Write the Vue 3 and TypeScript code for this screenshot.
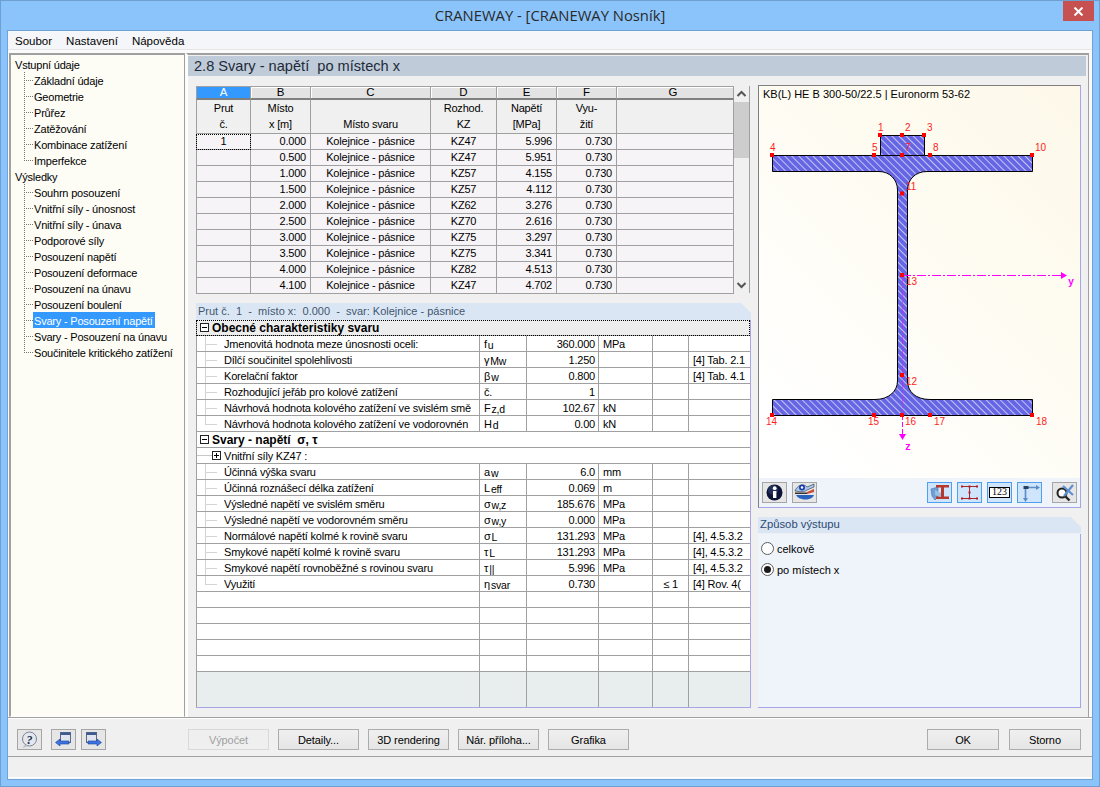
<script setup lang="ts">
interface TreeItem { label: string; last?: boolean; selected?: boolean }
interface Row {
  kind: 'group' | 'sub' | 'item' | 'empty'
  label?: string
  sym?: string
  sub?: string
  val?: string
  unit?: string
  lim?: string
  ref?: string
  focus?: boolean
  last?: boolean
}

const heading = '2.8 Svary - napětí  po místech x'
const infoText = 'Prut č.  1  -  místo x:  0.000  -  svar: Kolejnice - pásnice'

const inputs: TreeItem[] = [
  { label: 'Základní údaje' }, { label: 'Geometrie' }, { label: 'Průřez' }, { label: 'Zatěžování' },
  { label: 'Kombinace zatížení' }, { label: 'Imperfekce', last: true },
]
const results: TreeItem[] = [
  { label: 'Souhrn posouzení' }, { label: 'Vnitřní síly - únosnost' }, { label: 'Vnitřní síly - únava' },
  { label: 'Podporové síly' }, { label: 'Posouzení napětí' }, { label: 'Posouzení deformace' },
  { label: 'Posouzení na únavu' }, { label: 'Posouzení boulení' },
  { label: 'Svary - Posouzení napětí', selected: true }, { label: 'Svary - Posouzení na únavu' },
  { label: 'Součinitele kritického zatížení', last: true },
]

const letters = ['A', 'B', 'C', 'D', 'E', 'F', 'G']
const stations = [
  ['1', '0.000', 'KZ47', '5.996'], ['', '0.500', 'KZ47', '5.951'], ['', '1.000', 'KZ57', '4.155'],
  ['', '1.500', 'KZ57', '4.112'], ['', '2.000', 'KZ62', '3.276'], ['', '2.500', 'KZ70', '2.616'],
  ['', '3.000', 'KZ75', '3.297'], ['', '3.500', 'KZ75', '3.341'], ['', '4.000', 'KZ82', '4.513'],
  ['', '4.100', 'KZ47', '4.702'],
]

const rows: Row[] = [
  { kind: 'group', label: 'Obecné charakteristiky svaru', focus: true },
  { kind: 'item', label: 'Jmenovitá hodnota meze únosnosti oceli:', sym: 'f', sub: 'u', val: '360.000', unit: 'MPa' },
  { kind: 'item', label: 'Dílčí součinitel spolehlivosti', sym: 'γ', sub: 'Mw', val: '1.250', ref: '[4] Tab. 2.1' },
  { kind: 'item', label: 'Korelační faktor', sym: 'β', sub: 'w', val: '0.800', ref: '[4] Tab. 4.1' },
  { kind: 'item', label: 'Rozhodující jeřáb pro kolové zatížení', sym: 'č.', val: '1' },
  { kind: 'item', label: 'Návrhová hodnota kolového zatížení ve svislém smě', sym: 'F', sub: 'z,d', val: '102.67', unit: 'kN' },
  { kind: 'item', label: 'Návrhová hodnota kolového zatížení ve vodorovnén', sym: 'H', sub: 'd', val: '0.00', unit: 'kN', last: true },
  { kind: 'group', label: 'Svary - napětí  σ, τ' },
  { kind: 'sub', label: 'Vnitřní síly KZ47 :' },
  { kind: 'item', label: 'Účinná výška svaru', sym: 'a', sub: 'w', val: '6.0', unit: 'mm' },
  { kind: 'item', label: 'Účinná roznášecí délka zatížení', sym: 'L', sub: 'eff', val: '0.069', unit: 'm' },
  { kind: 'item', label: 'Výsledné napětí ve svislém směru', sym: 'σ', sub: 'w,z', val: '185.676', unit: 'MPa' },
  { kind: 'item', label: 'Výsledné napětí ve vodorovném směru', sym: 'σ', sub: 'w,y', val: '0.000', unit: 'MPa' },
  { kind: 'item', label: 'Normálové napětí kolmé k rovině svaru', sym: 'σ', sub: 'L', val: '131.293', unit: 'MPa', ref: '[4], 4.5.3.2' },
  { kind: 'item', label: 'Smykové napětí kolmé k rovině svaru', sym: 'τ', sub: 'L', val: '131.293', unit: 'MPa', ref: '[4], 4.5.3.2' },
  { kind: 'item', label: 'Smykové napětí rovnoběžné s rovinou svaru', sym: 'τ', sub: '||', val: '5.996', unit: 'MPa', ref: '[4], 4.5.3.2' },
  { kind: 'item', label: 'Využití', sym: 'η', sub: 'svar', val: '0.730', lim: '≤ 1', ref: '[4] Rov. 4(', last: true },
  { kind: 'empty' }, { kind: 'empty' }, { kind: 'empty' }, { kind: 'empty' }, { kind: 'empty' },
]

const points: [number, number][] = [
  [880, 135], [902, 135], [924, 135], [772, 155], [874, 155], [902, 155], [930, 155], [1032, 155],
  [902, 193.5], [902, 275], [902, 375], [772, 415], [874, 415], [902, 415], [930, 415], [1032, 415],
]
const labels: [string, number, number][] = [
  ['1', 878, 131], ['2', 905, 131], ['3', 927, 131], ['4', 770, 151], ['5', 872, 151], ['7', 905, 151],
  ['8', 933, 151], ['10', 1035, 151], ['11', 906, 190], ['13', 906, 285], ['12', 906, 385], ['14', 766, 425],
  ['15', 868, 425], ['16', 905, 425], ['17', 934, 425], ['18', 1036, 425],
]
const beam = 'M880.5 135.5H924.5V155.5H1032.5V171.5H927C915 171.5 907.5 180 907.5 190V381C907.5 391 915 399.5 930 399.5H1032.5V415.5H772.5V399.5H875C889 399.5 897.5 391 897.5 381V190C897.5 180 890 171.5 879 171.5H772.5V155.5H880.5Z'
</script>

<template>
  <div class="window">
    <header class="titlebar">
      <span class="title">CRANEWAY - [CRANEWAY Nosník]</span>
      <div class="close">
        <svg width="11" height="9" viewBox="0 0 11 9"><path d="M1.5 0.5 9.5 8.5M9.5 0.5 1.5 8.5" stroke="#fff" stroke-width="2" fill="none" /></svg>
      </div>
    </header>

    <div class="client">
      <nav class="menu"><span>Soubor</span><span>Nastavení</span><span>Nápověda</span></nav>

      <div class="body">
        <aside class="nav">
          <div class="nav-root">Vstupní údaje</div>
          <div v-for="it in inputs" :key="it.label" class="nav-row">
            <span class="guide" :class="{ end: it.last }"></span><span class="nav-text">{{ it.label }}</span>
          </div>
          <div class="nav-root">Výsledky</div>
          <div v-for="it in results" :key="it.label" class="nav-row">
            <span class="guide" :class="{ end: it.last }"></span><span class="nav-text" :class="{ sel: it.selected }">{{ it.label }}</span>
          </div>
        </aside>

        <main class="main">
          <h1 class="heading">{{ heading }}</h1>
          <div class="columns">
            <section class="left">
              <div class="top-block">
                <table class="grid">
                  <colgroup>
                    <col style="width:55px" /><col style="width:60px" /><col style="width:120px" /><col style="width:66px" />
                    <col style="width:60px" /><col style="width:60px" /><col style="width:117px" />
                  </colgroup>
                  <thead>
                    <tr class="letters">
                      <th v-for="(l, i) in letters" :key="l" :class="{ active: i === 0 }">{{ l }}</th>
                    </tr>
                    <tr class="captions">
                      <th>Prut<br />č.</th><th>Místo<br />x [m]</th><th><br />Místo svaru</th><th>Rozhod.<br />KZ</th>
                      <th>Napětí<br />[MPa]</th><th>Vyu-<br />žití</th><th></th>
                    </tr>
                  </thead>
                  <tbody>
                    <tr v-for="(s, i) in stations" :key="s[1]">
                      <td class="c" :class="{ focus: i === 0 }">{{ s[0] }}</td>
                      <td class="r">{{ s[1] }}</td>
                      <td class="c">Kolejnice - pásnice</td>
                      <td class="c">{{ s[2] }}</td>
                      <td class="r">{{ s[3] }}</td>
                      <td class="r">0.730</td>
                      <td></td>
                    </tr>
                  </tbody>
                </table>
                <div class="scrollbar">
                  <svg class="sb-arrow" width="15" height="16" viewBox="0 0 15 16"><path d="M3.5 10 7.5 6 11.5 10" fill="none" stroke="#555" stroke-width="2" /></svg>
                  <div class="sb-thumb"></div>
                  <div class="sb-track"></div>
                  <svg class="sb-arrow" width="15" height="16" viewBox="0 0 15 16"><path d="M3.5 6 7.5 10 11.5 6" fill="none" stroke="#555" stroke-width="2" /></svg>
                </div>
              </div>

              <div class="info">{{ infoText }}</div>

              <div class="detail-wrap">
                <table class="detail">
                  <colgroup>
                    <col style="width:284px" /><col style="width:47px" /><col style="width:72px" />
                    <col style="width:54px" /><col style="width:36px" /><col style="width:61px" />
                  </colgroup>
                  <tbody>
                    <tr v-for="(r, i) in rows" :key="i">
                      <td v-if="r.kind === 'group'" colspan="6" class="group" :class="{ focused: r.focus }">
                        <div class="cell-flex">
                          <span class="box"><i></i></span><b class="txt">{{ r.label }}</b>
                        </div>
                      </td>
                      <td v-else-if="r.kind === 'sub'" colspan="6" class="subgroup">
                        <div class="cell-flex">
                          <span class="sub-line"></span><span class="box plus"><i></i><em></em></span><span class="txt">{{ r.label }}</span>
                        </div>
                      </td>
                      <template v-else-if="r.kind === 'item'">
                        <td class="lbl">
                          <div class="cell-flex">
                            <span class="tline" :class="{ end: r.last }"></span><span class="txt clip">{{ r.label }}</span>
                          </div>
                        </td>
                        <td class="cellv sym">{{ r.sym }}<span v-if="r.sub" class="sy">{{ r.sub }}</span></td>
                        <td class="cellv val">{{ r.val }}</td>
                        <td class="cellv unit">{{ r.unit }}</td>
                        <td class="cellv lim">{{ r.lim }}</td>
                        <td class="cellv ref">{{ r.ref }}</td>
                      </template>
                      <template v-else>
                        <td></td><td></td><td></td><td></td><td></td><td class="ref"></td>
                      </template>
                    </tr>
                    <tr class="foot">
                      <td></td><td></td><td></td><td></td><td></td><td class="ref"></td>
                    </tr>
                  </tbody>
                </table>
              </div>
            </section>

            <section class="right">
              <div class="preview">
                <div class="pv-title">KB(L) HE B 300-50/22.5 | Euronorm 53-62</div>
                <svg class="pv-svg" width="321" height="374" viewBox="759 104 321 374">
                  <defs>
                    <pattern id="hatch" width="5" height="5" patternUnits="userSpaceOnUse" patternTransform="rotate(45)">
                      <rect width="5" height="5" fill="#6666e4" />
                      <rect width="5" height="1" y="0" fill="#c4c4f6" />
                    </pattern>
                  </defs>
                  <path :d="beam" fill="url(#hatch)" stroke="#000" stroke-width="1" />
                  <path d="M880.5 155.5H924.5" stroke="#000" fill="none" />
                  <path d="M902 275.5H1061" stroke="#f0f" stroke-dasharray="9 2 2 2" fill="none" />
                  <path d="M902.5 275V415" stroke="#f0f" stroke-opacity=".55" stroke-dasharray="9 2 2 2" fill="none" />
                  <path d="M902.5 415V434" stroke="#f0f" stroke-dasharray="5 2" fill="none" />
                  <polygon points="1061,272 1067,275.5 1061,279" fill="#f0f" />
                  <polygon points="899,434 906,434 902.5,440" fill="#f0f" />
                  <rect v-for="p in points" :key="p[0] + '-' + p[1]" :x="p[0] - 2" :y="p[1] - 2" width="4" height="4" fill="#f00" />
                  <text v-for="l in labels" :key="l[0]" :x="l[1]" :y="l[2]" class="pt">{{ l[0] }}</text>
                  <text x="1068" y="285" class="ax">y</text>
                  <text x="905" y="450" class="ax">z</text>
                </svg>
                <div class="pv-tools">
                  <div class="tool">
                    <svg width="19" height="19" viewBox="0 0 19 19"><circle cx="9.5" cy="9.5" r="8" fill="#0b1436" /><circle cx="8" cy="7" r="5" fill="#3a4a80" opacity=".5" /><rect x="8" y="8" width="3.4" height="7" fill="#fff" /><circle cx="9.7" cy="5.2" r="1.9" fill="#fff" /></svg>
                  </div>
                  <div class="tool">
                    <svg width="21" height="19" viewBox="0 0 21 19">
                      <path d="M1 8C3 2 10 0 13 4L20 1V4L13 7C11 9 6 9 1 8Z" fill="#a9c6e6" stroke="#234" stroke-width=".6" />
                      <circle cx="8" cy="4.5" r="3" fill="#1b3fae" /><circle cx="8" cy="4.5" r="1.2" fill="#fff" />
                      <path d="M13 9 20 6V9L13 11Z" fill="#c84a3a" /><path d="M1 9.5H13V11H1Z" fill="#333" />
                      <path d="M2 12H20C18 18 5 18 2 12Z" fill="#2a62c0" />
                    </svg>
                  </div>
                  <span class="spacer"></span>
                  <div class="tool on">
                    <svg width="21" height="19" viewBox="0 0 21 19">
                      <path d="M2 6 9 4V14L6 17 3 13Z" fill="#6f9fd4" stroke="#4a75a8" stroke-width=".6" />
                      <path d="M7 2H20V4.5H15V13.5H20V16H7V13.5H12V4.5H7Z" fill="#b5392e" />
                      <path d="M6 7 12 10V14L6 12Z" fill="#9cc0e2" />
                    </svg>
                  </div>
                  <div class="tool on">
                    <svg width="21" height="19" viewBox="0 0 21 19">
                      <path d="M3 3.5H18M3 15.5H18M10.5 3V15" stroke="#a4282c" stroke-width="1" fill="none" />
                      <g fill="#b01c22"><rect x="2" y="2.5" width="2" height="2" /><rect x="9.5" y="2.5" width="2" height="2" /><rect x="17" y="2.5" width="2" height="2" /><rect x="2" y="14.5" width="2" height="2" /><rect x="9.5" y="14.5" width="2" height="2" /><rect x="17" y="14.5" width="2" height="2" /><rect x="9.5" y="8.5" width="2" height="2" /></g>
                    </svg>
                  </div>
                  <div class="tool on">
                    <span class="num">123</span>
                  </div>
                  <div class="tool on">
                    <svg width="21" height="19" viewBox="0 0 21 19">
                      <path d="M6.5 4.5H18M6.5 4.5V16" stroke="#5b8cc8" stroke-width="1.6" fill="none" />
                      <path d="M17 2 21 4.5 17 7Z" fill="#5b8cc8" /><path d="M4 15H9L6.5 19Z" fill="#5b8cc8" /><rect x="4.5" y="3" width="5" height="3" fill="#27415f" />
                    </svg>
                  </div>
                  <div class="tool gap">
                    <svg width="21" height="19" viewBox="0 0 21 19">
                      <circle cx="8" cy="10" r="4.5" fill="#fff" stroke="#222" stroke-width="2" />
                      <path d="M11.5 13.5 15.5 17.5" stroke="#222" stroke-width="2.4" />
                      <path d="M9 3 19 12M19 2 10 13" stroke="#5f8fd0" stroke-width="2.2" fill="none" />
                    </svg>
                  </div>
                </div>
              </div>

              <div class="output">
                <div class="out-head">Způsob výstupu</div>
                <div class="out-body">
                  <div class="radio"><span class="dot"></span><span>celkově</span></div>
                  <div class="radio"><span class="dot checked"></span><span>po místech x</span></div>
                </div>
              </div>
            </section>
          </div>
        </main>
      </div>

      <footer class="actions">
        <div class="ico-btn">
          <svg width="19" height="17" viewBox="0 0 19 17"><circle cx="9.5" cy="8" r="7" fill="#e4e7ed" stroke="#7a8496" /><path d="M4 14 3 17 8 15Z" fill="#b9c0cc" /><text x="9.5" y="12.5" class="qm">?</text></svg>
        </div>
        <div class="ico-btn wide">
          <svg width="19" height="18" viewBox="0 0 19 18"><rect x="6.5" y="1.5" width="10" height="10" fill="#dfe5ee" stroke="#5a6a84" /><rect x="6.5" y="1.5" width="10" height="2.5" fill="#3e5a90" /><path d="M1.5 11.5 6 8V10H15V13H6V15Z" fill="#3f74e0" stroke="#16409c" stroke-width=".6" /></svg>
        </div>
        <div class="ico-btn near">
          <svg width="19" height="18" viewBox="0 0 19 18"><rect x="2.5" y="1.5" width="10" height="10" fill="#dfe5ee" stroke="#5a6a84" /><rect x="2.5" y="1.5" width="10" height="2.5" fill="#3e5a90" /><path d="M17.5 11.5 13 8V10H4V13H13V15Z" fill="#3f74e0" stroke="#16409c" stroke-width=".6" /></svg>
        </div>
        <button class="btn disabled first">Výpočet</button>
        <button class="btn">Detaily...</button>
        <button class="btn">3D rendering</button>
        <button class="btn">Nár. příloha...</button>
        <button class="btn">Grafika</button>
        <span class="spacer"></span>
        <button class="btn short">OK</button>
        <button class="btn short">Storno</button>
      </footer>
      <div class="status"></div>
    </div>
  </div>
</template>

<style>
html, body { margin: 0; padding: 0; }
</style>

<style scoped>
* { box-sizing: border-box; }
.window {
  width: 1100px; height: 787px; background: #8ac4fb; box-shadow: inset 0 0 0 1px #6d9fd0;
  display: flex; flex-direction: column; padding: 0 7px 7px;
  font-family: "Liberation Sans", Arial, sans-serif; font-size: 11px; letter-spacing: -0.2px; color: #000; overflow: hidden;
}
.titlebar { height: 30px; flex: none; display: grid; grid-template-columns: 1fr auto 1fr; letter-spacing: 0; }
.title { grid-column: 2; font-family: "Open Sans", sans-serif; font-size: 14.8px; line-height: 31px; color: #2a2a2a; }
.close { grid-column: 3; justify-self: end; margin: 1px -1px 0 0; width: 31px; height: 20px; background: #c75050; display: flex; align-items: center; justify-content: center; }

.client { flex: 1; border: 1px solid #6fa3d5; background: #f6f7fa; display: flex; flex-direction: column; min-height: 0; }
.menu { height: 19px; flex: none; display: flex; gap: 14px; padding: 1px 0 0 7px; align-items: center; border-bottom: 1px solid #e6e6e6; background: #f5f6f9; font-size: 11.5px; letter-spacing: 0; }

.body { height: 667px; flex: none; display: flex; padding: 3px 0 0 1px; background: #fbfbfb; }
.nav { width: 176px; border: 1px solid #fff; border-top: 2px solid #a0a0a0; border-left: 2px solid #a0a0a0; border-right: 1px solid #a0a0a0; background: #fdfcf5; padding: 1px 0 0 4px; }
.nav-root, .nav-row { height: 16px; line-height: 18px; white-space: nowrap; }
.nav-row { display: flex; padding-left: 9px; }
.guide {
  width: 9px; height: 16px; flex: none;
  background:
    repeating-linear-gradient(to bottom, #777 0 1px, transparent 1px 2px) left top / 1px 100% no-repeat,
    repeating-linear-gradient(to right, #777 0 1px, transparent 1px 2px) left 8px / 9px 1px no-repeat;
}
.guide.end {
  background:
    repeating-linear-gradient(to bottom, #777 0 1px, transparent 1px 2px) left top / 1px 9px no-repeat,
    repeating-linear-gradient(to right, #777 0 1px, transparent 1px 2px) left 8px / 9px 1px no-repeat;
}
.nav-text { padding: 0 1px; height: 16px; }
.nav-text.sel { background: #3399ff; color: #fff; width: 122px; }

.main { width: 903px; margin-left: 1px; border-top: 2px solid #a0a0a0; border-left: 2px solid #fff; border-right: 1px solid #a0a0a0; background: #f0f0f0; display: flex; flex-direction: column; }
.heading { margin: 1px 2px 0 0; height: 20px; background: #bfcbd9; font-weight: normal; font-size: 14.6px; line-height: 20px; letter-spacing: 0; padding-left: 6px; color: #1e2a38; white-space: pre; }
.columns { display: flex; padding: 9px 0 0 8px; gap: 7px; }

.left { width: 555px; flex: none; padding-top: 1px; }
.top-block { display: flex; width: 554px; height: 207px; }
.grid { table-layout: fixed; width: 538px; height: 207px; border-collapse: separate; border-spacing: 0; background: #f0f0f0; }
.grid th, .grid td { padding: 0; border-right: 1px solid #a0a0a0; border-bottom: 1px solid #a0a0a0; font-weight: normal; overflow: hidden; white-space: nowrap; }
.grid th:first-child, .grid td:first-child { border-left: 1px solid #a0a0a0; }
.letters th { height: 14px; line-height: 11px; background: #e3e3e3; border-top: 1px solid #a0a0a0; border-bottom: 2px solid #808080; box-shadow: inset 1px 1px 0 #fff; font-size: 11.5px; letter-spacing: 0; }
.letters th:last-child { padding-right: 4px; }
.letters th.active { background: #3399ff; color: #fff; box-shadow: none; }
.captions th { height: 33px; line-height: 16px; background: #f0f0f0; vertical-align: bottom; padding-bottom: 1px; }
.grid td { height: 16px; line-height: 15px; background: #f7f4f7; }
.grid td.c { text-align: center; }
.grid td.r { text-align: right; padding-right: 4px; }
.grid td.focus { outline: 1px dotted #000; outline-offset: -1px; background: #f7f4f7; }
.scrollbar { width: 16px; height: 207px; border-right: 1px solid #a0a0a0; display: flex; flex-direction: column; background: #f0f0f0; }
.sb-arrow { flex: none; display: block; }
.sb-thumb { height: 56px; background: #cdcdcd; flex: none; }
.sb-track { flex: 1; }

.info { margin-top: 10px; height: 17px; line-height: 16px; padding-left: 2px; background: #dbe6f4; color: #3f5670; white-space: pre; letter-spacing: 0; clip-path: polygon(0 0, calc(100% - 10px) 0, 100% 10px, 100% 100%, 0 100%); }
.detail-wrap { border-right: 1px solid #a5a5e8; border-bottom: 1px solid #a5a5e8; height: 388px; background: #f0f0f0; }
.detail { table-layout: fixed; width: 554px; border-collapse: separate; border-spacing: 0; }
.detail td { height: 16px; padding: 0; border-right: 1px solid #a0a0a0; border-bottom: 1px solid #a0a0a0; background: #fff; line-height: 15px; white-space: nowrap; overflow: hidden; }
.detail td.cellv { padding-top: 1px; line-height: 14px; }
.detail td:first-child { border-left: 1px solid #a0a0a0; }
.detail td.ref { border-right: 0; padding-left: 4px; }
.detail td.group { border-right: 0; font-size: 12px; letter-spacing: 0; }
.detail td.group b { white-space: pre; }
.detail td.group.focused { background: #ededed; outline: 1px dotted #000; outline-offset: -1px; }
.detail td.subgroup { border-right: 0; }
.cell-flex { display: flex; align-items: center; height: 15px; line-height: 14px; overflow: hidden; }
.txt { padding-top: 1px; }
.box { width: 9px; height: 9px; border: 1px solid #222; background: #fff; margin: 0 3px 0 3px; flex: none; display: flex; align-items: center; justify-content: center; position: relative; }
.box i { display: block; width: 5px; height: 1px; background: #000; }
.box.plus { margin: 0 3px 0 0; }
.box.plus em { position: absolute; left: 3px; top: 1px; width: 1px; height: 5px; background: #000; }
.sub-line { width: 15px; height: 1px; margin-left: 0; background: #c8c8c8; flex: none; }
.tline {
  width: 27px; height: 15px; flex: none; align-self: flex-start;
  background: linear-gradient(#d4d4d4, #d4d4d4) 8px 0 / 1px 100% no-repeat, linear-gradient(#d4d4d4, #d4d4d4) 8px 8px / 12px 1px no-repeat;
}
.tline.end { background: linear-gradient(#d4d4d4, #d4d4d4) 8px 0 / 1px 9px no-repeat, linear-gradient(#d4d4d4, #d4d4d4) 8px 8px / 12px 1px no-repeat; }
.clip { overflow: hidden; }
.sym { padding-left: 4px !important; }
.sy { font-size: 10.5px; position: relative; top: 1px; margin-left: 1px; }
.val { text-align: right; padding-right: 3px !important; }
.unit { padding-left: 4px !important; }
.lim { text-align: center; }
.foot td { height: 35px; background: #e8eded; border-bottom: 0; }

.right { width: 323px; flex: none; }
.preview { height: 423px; border-top: 1px solid #808080; border-left: 1px solid #808080; border-right: 1px solid #a5a5e8; border-bottom: 1px solid #a5a5e8; background: linear-gradient(45deg, #ffffff 15%, #fefcf3 55%, #fdf8e9 100%); display: flex; flex-direction: column; }
.pv-title { height: 18px; line-height: 17px; padding-left: 4px; white-space: nowrap; letter-spacing: 0; }
.pv-svg { display: block; flex: none; }
.pt { font: 10px "Liberation Sans", Arial, sans-serif; fill: #f22; letter-spacing: 0; }
.ax { font: bold 10px "Liberation Mono", monospace; fill: #f0f; letter-spacing: 0; }
.pv-tools { flex: 1; background: #eff3fa; display: flex; padding: 4px 3px 0; gap: 5px; align-items: flex-start; }
.tool { width: 25px; height: 21px; border: 1px solid #a6a6a6; background: #e6e6e6; display: flex; align-items: center; justify-content: center; flex: none; }
.tool.on { background: #cfe5fb; border-color: #4ea0ef; }
.tool.gap { margin-left: 5px; }
.num { border: 1.5px solid #000; background: #fff; font: 10px "Liberation Serif", serif; line-height: 8px; padding: 0 2px; height: 11px; letter-spacing: 0; }
.spacer { flex: 1; }

.output { margin-top: 9px; height: 191px; display: flex; flex-direction: column; letter-spacing: 0; }
.out-head { height: 16px; flex: none; background: #dbe6f4; color: #2d4a73; line-height: 15px; padding-left: 2px; clip-path: polygon(0 0, calc(100% - 10px) 0, 100% 10px, 100% 100%, 0 100%); font-size: 11.3px; }
.out-body { flex: 1; margin-top: 1px; background: #eff3fa; border-right: 1px solid #a5a5e8; border-bottom: 1px solid #a5a5e8; padding: 4px 0 0 3px; }
.radio { display: flex; align-items: center; gap: 3px; height: 21px; white-space: nowrap; }
.dot { width: 13px; height: 13px; border-radius: 50%; border: 1px solid #5c5c5c; background: #fff; flex: none; display: flex; align-items: center; justify-content: center; }
.dot.checked::after { content: ""; width: 7px; height: 7px; border-radius: 50%; background: #1a1a1a; }

.actions { height: 40px; flex: none; display: flex; align-items: flex-start; padding: 11px 11px 0 9px; gap: 9px; background: #f0f0f0; border-top: 1px solid #a0a0a0; box-shadow: inset 0 1px 0 #fff; border-bottom: 1px solid #a0a0a0; }
.ico-btn { width: 25px; height: 21px; border: 1px solid #a6a6a6; background: #e6e6e6; display: flex; align-items: center; justify-content: center; flex: none; }
.ico-btn.near { margin-left: -4px; }
.qm { font: bold italic 12px "Liberation Serif", serif; text-anchor: middle; fill: #1d2a44; }
.btn { width: 81px; height: 21px; padding: 0; border: 1px solid #acacac; background: linear-gradient(#f0f0f0, #e5e5e5); font: 11px "Liberation Sans", Arial, sans-serif; letter-spacing: -0.1px; color: #000; flex: none; }
.btn.first { margin-left: 73px; }
.btn.disabled { color: #9f9f9f; border-color: #d9d9d9; background: #efefef; }
.btn.short { width: 72px; }
.btn.short + .btn.short { margin-left: 1px; }
.status { height: 21px; flex: none; background: #f0f0f0; border-bottom: 1px solid #fff; }
</style>
